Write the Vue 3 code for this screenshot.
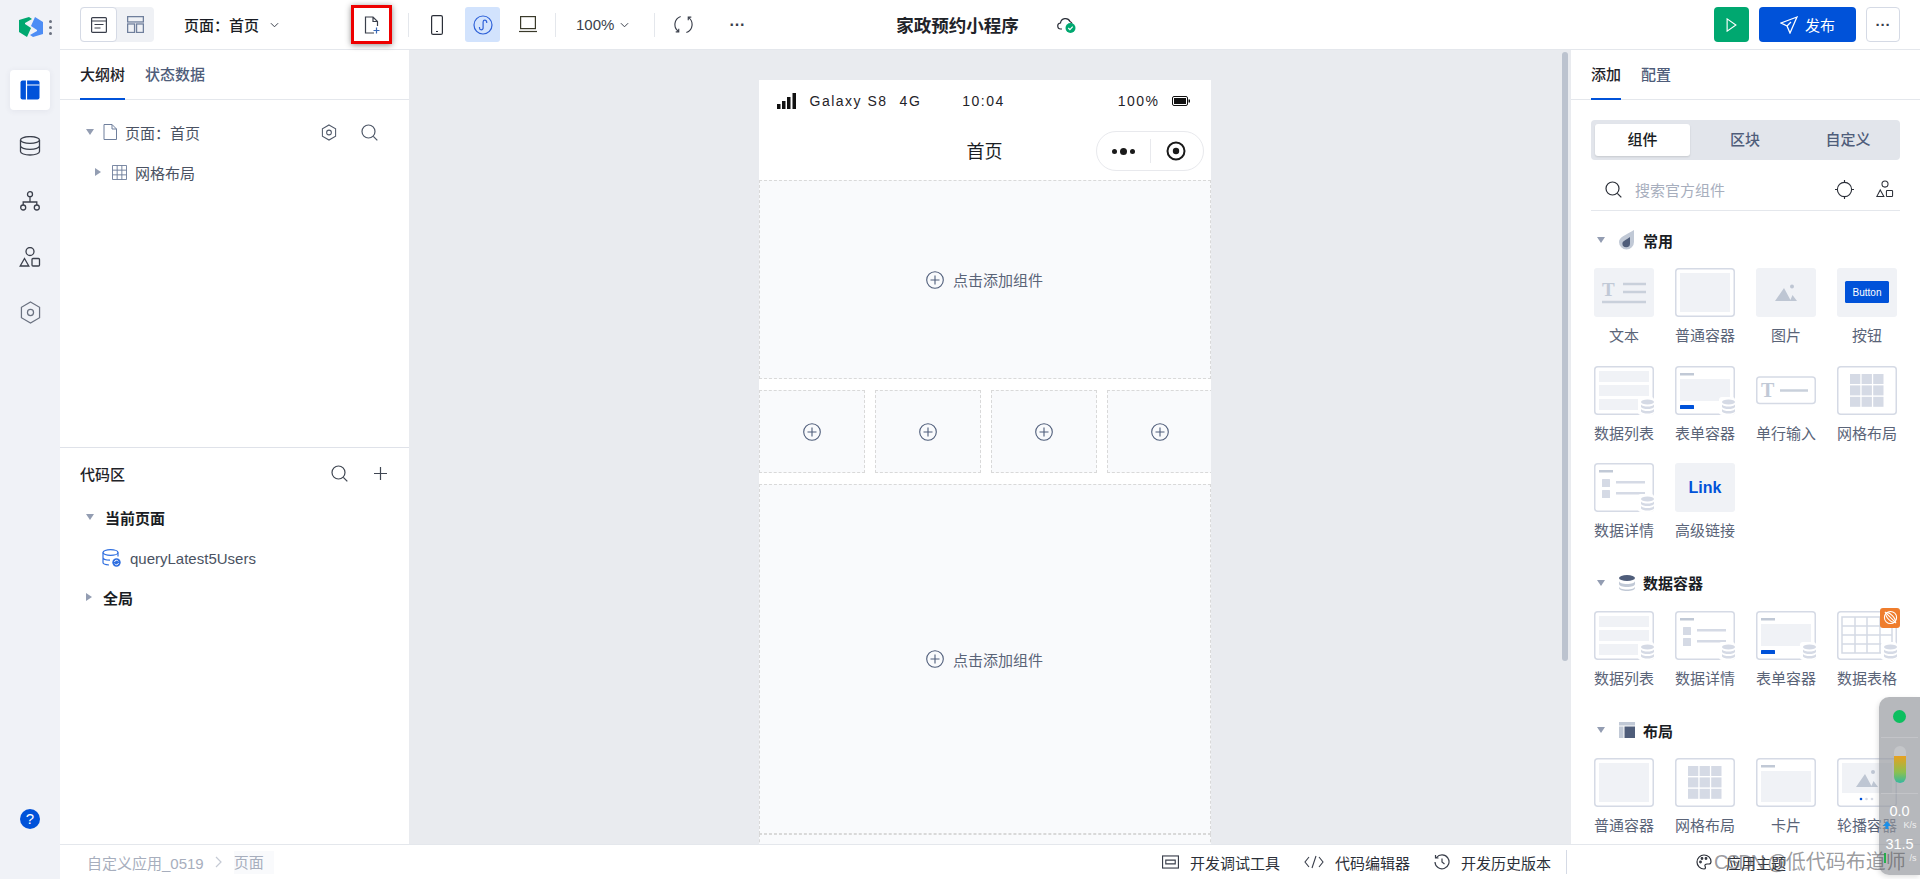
<script setup>
const railIcons = ['layout', 'db', 'tree', 'shapes', 'hex']

const sections = [
  {
    title: '常用',
    icon: 'drop',
    items: [
      { label: '文本', kind: 'text' },
      { label: '普通容器', kind: 'box' },
      { label: '图片', kind: 'image' },
      { label: '按钮', kind: 'button' },
      { label: '数据列表', kind: 'list' },
      { label: '表单容器', kind: 'form' },
      { label: '单行输入', kind: 'input' },
      { label: '网格布局', kind: 'grid' },
      { label: '数据详情', kind: 'detail' },
      { label: '高级链接', kind: 'link' }
    ]
  },
  {
    title: '数据容器',
    icon: 'stack',
    items: [
      { label: '数据列表', kind: 'list' },
      { label: '数据详情', kind: 'detail' },
      { label: '表单容器', kind: 'form' },
      { label: '数据表格', kind: 'table', badge: true }
    ]
  },
  {
    title: '布局',
    icon: 'panel',
    items: [
      { label: '普通容器', kind: 'box' },
      { label: '网格布局', kind: 'grid' },
      { label: '卡片', kind: 'card' },
      { label: '轮播容器', kind: 'carousel' }
    ]
  }
]

const gridCells = []
for (let r = 0; r < 3; r++) {
  for (let c = 0; c < 3; c++) {
    gridCells.push({ x: 13 + c * 11.6, y: 8 + r * 11.4 })
  }
}
</script>

<template>
  <div class="app">
    <aside class="rail">
      <div class="rail-logo">
        <svg viewBox="0 0 24 20" width="24" height="20">
          <path d="M0 3L10 0l3 2-7 4v1l6 4-4 9-8-5z" fill="#00a870"/>
          <path d="M24 17l-10 3-3-2 7-4v-1l-6-4 4-9 8 5z" fill="#4d8df5"/>
        </svg>
        <span class="logo-dots"><i></i><i></i><i></i></span>
      </div>
      <div v-for="icon in railIcons" :key="icon" class="rail-item" :class="{ active: icon === 'layout' }">
        <svg v-if="icon === 'layout'" viewBox="0 0 20 20" width="20" height="20">
          <rect x="0.500" y="0.500" width="19" height="19" rx="2" fill="#0052d9"/>
          <path d="M6.500 5h13M6.500 0v20" stroke="#fff" stroke-width="1.200" fill="none"/>
        </svg>
        <svg v-else-if="icon === 'db'" viewBox="0 0 22 20" width="22" height="20" fill="none" stroke="#3a3f4b" stroke-width="1.300">
          <ellipse cx="11" cy="4" rx="9.500" ry="3.400"/>
          <path d="M1.500 4v11.500c0 2 4.200 3.500 9.500 3.500s9.500-1.500 9.500-3.500V4M1.500 9.800c0 2 4.200 3.500 9.500 3.500s9.500-1.500 9.500-3.500"/>
        </svg>
        <svg v-else-if="icon === 'tree'" viewBox="0 0 20 20" width="20" height="20" fill="none" stroke="#3a3f4b" stroke-width="1.300">
          <circle cx="10" cy="3.200" r="2.500"/>
          <circle cx="3.200" cy="16.500" r="2.500"/>
          <circle cx="16.800" cy="16.500" r="2.500"/>
          <path d="M10 5.700v5.300M3.200 14v-3h13.600v3"/>
        </svg>
        <svg v-else-if="icon === 'shapes'" viewBox="0 0 22 20" width="22" height="20" fill="none" stroke="#3a3f4b" stroke-width="1.300">
          <circle cx="11" cy="4.500" r="4"/>
          <path d="M5.500 11.500l4.300 7.500H1.200z"/>
          <rect x="13" y="11.500" width="7.500" height="7.500" rx="1"/>
        </svg>
        <svg v-else viewBox="0 0 22 24" width="21" height="23" fill="none" stroke="#6b7280" stroke-width="1.300">
          <path d="M11 1l9.500 5.500v11L11 23l-9.500-5.500v-11z"/>
          <circle cx="11" cy="12" r="3.200"/>
        </svg>
      </div>
      <div class="rail-help">?</div>
    </aside>

    <div class="main">
      <header class="topbar">
        <div class="view-switch">
          <span class="view-btn active">
            <svg viewBox="0 0 16 16" width="16" height="16" fill="none" stroke="#3a3f4b" stroke-width="1.200">
              <rect x="0.600" y="0.600" width="14.800" height="14.800" rx="1"/>
              <path d="M0.600 4h14.800M3.500 7.500h9M3.500 11h6"/>
            </svg>
          </span>
          <span class="view-btn">
            <svg viewBox="0 0 16 16" width="17" height="17" fill="none" stroke="#6f7f9c" stroke-width="1.200">
              <rect x="0.600" y="0.600" width="14.800" height="5"/>
              <rect x="0.600" y="7.500" width="6.500" height="8"/>
              <rect x="9" y="7.500" width="6.400" height="8"/>
            </svg>
          </span>
        </div>
        <div class="page-select">
          <span>页面：首页</span>
          <svg viewBox="0 0 10 6" width="9" height="6" fill="none" stroke="#3a3f4b" stroke-width="1.100"><path d="M1 1l4 4 4-4"/></svg>
        </div>
        <div class="add-page">
          <svg viewBox="0 0 16 18" width="16" height="18" fill="none" stroke="#3a3f4b" stroke-width="1.200">
            <path d="M10 17H1.500V1H9l4.500 4.500V10M9 1v4.500h4.500"/>
            <path d="M9.500 14.500h6M12.500 11.500v6" stroke="#3566b5"/>
          </svg>
          <span class="mark"></span>
        </div>
        <span class="bar-sep first"></span>
        <span class="device">
          <svg viewBox="0 0 12 20" width="12" height="20" fill="none" stroke="#2b2f38" stroke-width="1.200">
            <rect x="0.600" y="0.600" width="10.800" height="18.800" rx="1.500"/>
            <path d="M5 16.500h2"/>
          </svg>
        </span>
        <span class="device on">
          <svg viewBox="0 0 20 20" width="20" height="20" fill="none" stroke="#2f62d8" stroke-width="1.200">
            <circle cx="10" cy="10" r="9"/>
            <path d="M6.500 12v1a1.800 1.800 0 0 0 3.600 0V7a1.800 1.800 0 0 1 3.600 0v1"/>
          </svg>
        </span>
        <span class="device">
          <svg viewBox="0 0 18 17" width="18" height="17" fill="none" stroke="#3a3a2a" stroke-width="1.200">
            <rect x="1.600" y="0.600" width="14.800" height="12"/>
            <path d="M0 15.500h18"/>
          </svg>
        </span>
        <span class="bar-sep"></span>
        <span class="zoom-val">100%</span>
        <svg class="zoom-arrow" viewBox="0 0 10 6" width="9" height="6" fill="none" stroke="#3a3f4b" stroke-width="1.100"><path d="M1 1l4 4 4-4"/></svg>
        <span class="bar-sep"></span>
        <span class="refresh">
          <svg viewBox="0 0 20 20" width="19" height="19" fill="none" stroke="#3a3f4b" stroke-width="1.200">
            <path d="M7 1.500A9 9 0 0 0 5 17.500M13 18.500a9 9 0 0 0 2-16M5 14.500v3.300H1.800M15 5.500V2.200h3.200"/>
          </svg>
        </span>
        <span class="dots">···</span>
        <div class="title">家政预约小程序</div>
        <span class="cloud">
          <svg viewBox="0 0 20 18" width="20" height="18">
            <path d="M5 13H4a3 3 0 0 1-.5-6A5 5 0 0 1 13 5.500a3.500 3.500 0 0 1 2 2" fill="none" stroke="#2b2f38" stroke-width="1.200"/>
            <circle cx="13.500" cy="12" r="5" fill="#00a870"/>
            <path d="M11.300 12l1.600 1.600 2.800-3" fill="none" stroke="#fff" stroke-width="1.200"/>
          </svg>
        </span>
        <div class="top-actions">
          <button class="btn-run">
            <svg viewBox="0 0 12 16" width="11" height="14" fill="none" stroke="#fff" stroke-width="1.300"><path d="M1 1l10 7-10 7z"/></svg>
          </button>
          <button class="btn-publish">
            <svg viewBox="0 0 18 18" width="18" height="18" fill="none" stroke="#fff" stroke-width="1.300">
              <path d="M17 1L1 7l6 3 3 7zM7 10l4-4"/>
            </svg>
            发布
          </button>
          <button class="btn-more">···</button>
        </div>
      </header>

      <div class="body">
        <section class="panel-left">
          <div class="left-top">
            <div class="tabs">
              <span class="tab active">大纲树</span>
              <span class="tab">状态数据</span>
            </div>
            <div class="tree-row page-row">
              <i class="caret down"></i>
              <svg class="row-icon" viewBox="0 0 14 16" width="14" height="16" fill="none" stroke="#6f7f9c" stroke-width="1"><path d="M1 .5h8l4.500 4.500v10.500H1zM9 .5V5h4.500"/></svg>
              <span>页面：首页</span>
              <div class="tree-tools">
                <svg viewBox="0 0 16 18" width="16" height="17" fill="none" stroke="#4f5868" stroke-width="1.100">
                  <path d="M8 1l7 4v8l-7 4-7-4V5z"/><circle cx="8" cy="9" r="2.500"/>
                </svg>
                <svg viewBox="0 0 17 17" width="17" height="17" fill="none" stroke="#4f5868" stroke-width="1.200">
                  <circle cx="7.500" cy="7.500" r="6.500"/><path d="M12.300 12.300l4 4"/>
                </svg>
              </div>
            </div>
            <div class="tree-row grid-row">
              <i class="caret side"></i>
              <svg class="row-icon" viewBox="0 0 16 16" width="15" height="15" fill="none" stroke="#6f7f9c" stroke-width="1"><path d="M.5.500h15v15H.5zM5.500.5v15M10.500.5v15M.5 5.500h15M.5 10.500h15"/></svg>
              <span>网格布局</span>
            </div>
          </div>
          <div class="code-area">
            <div class="code-head">
              <span>代码区</span>
              <div class="code-tools">
                <svg viewBox="0 0 17 17" width="17" height="17" fill="none" stroke="#3f4652" stroke-width="1.200">
                  <circle cx="7.500" cy="7.500" r="6.500"/><path d="M12.300 12.300l4 4"/>
                </svg>
                <svg viewBox="0 0 13 13" width="13" height="13" fill="none" stroke="#3f4652" stroke-width="1.200"><path d="M6.500 0v13M0 6.500h13"/></svg>
              </div>
            </div>
            <div class="code-group"><i class="caret down"></i><span>当前页面</span></div>
            <div class="code-item">
              <svg viewBox="0 0 20 19" width="20" height="19" fill="none" stroke="#2f6fe0" stroke-width="1.200">
                <ellipse cx="8.500" cy="3.500" rx="7.500" ry="2.800"/>
                <path d="M1 3.500v10c0 1.200 2.500 2.200 6 2.500M1 8.500c0 1.400 2.800 2.600 7 2.700M16 3.500v4"/>
                <circle cx="14.500" cy="13.500" r="4.200" fill="#2f6fe0" stroke="none"/>
                <path d="M12.500 13a2 2 0 0 1 3.800-.6M16.500 14a2 2 0 0 1-3.800.6" stroke="#fff" stroke-width="0.900"/>
              </svg>
              <span>queryLatest5Users</span>
            </div>
            <div class="code-group"><i class="caret side"></i><span>全局</span></div>
          </div>
        </section>

        <section class="canvas">
          <div class="canvas-scroll">
            <div class="phone">
              <div class="status">
                <svg viewBox="0 0 20 16" width="20" height="16" fill="#111">
                  <rect x="0" y="11" width="3.500" height="5"/>
                  <rect x="5" y="8" width="3.500" height="8"/>
                  <rect x="10" y="4" width="3.500" height="12"/>
                  <rect x="15.500" y="0" width="3.500" height="16"/>
                </svg>
                <span class="carrier">Galaxy S8</span>
                <span class="net">4G</span>
                <span class="clock">10:04</span>
                <span class="batt-num">100%</span>
                <svg viewBox="0 0 18 10" width="18" height="10">
                  <rect x="0.500" y="0.500" width="15" height="9" rx="1.500" fill="none" stroke="#111"/>
                  <rect x="2" y="2" width="12" height="6" fill="#111"/>
                  <rect x="16.500" y="3.500" width="1.500" height="3" fill="#111"/>
                </svg>
              </div>
              <div class="navbar">
                <span class="nav-title">首页</span>
                <div class="capsule">
                  <span class="cap-dots"><i></i><b></b><i></i></span>
                  <span class="cap-sep"></span>
                  <svg viewBox="0 0 20 20" width="20" height="20">
                    <circle cx="10" cy="10" r="8.500" fill="none" stroke="#1a1a1a" stroke-width="2"/>
                    <circle cx="10" cy="10" r="3.200" fill="#1a1a1a"/>
                  </svg>
                </div>
              </div>
              <div class="slot slot-a">
                <svg class="plus" viewBox="0 0 18 18" width="18" height="18" fill="none" stroke="#4f5d7a" stroke-width="1.100">
                  <circle cx="9" cy="9" r="8.300"/><path d="M9 4.500v9M4.500 9h9"/>
                </svg>
                <span>点击添加组件</span>
              </div>
              <div class="slot-row">
                <div v-for="n in 4" :key="n" class="slot cell">
                  <svg class="plus" viewBox="0 0 18 18" width="18" height="18" fill="none" stroke="#4f5d7a" stroke-width="1.100">
                    <circle cx="9" cy="9" r="8.300"/><path d="M9 4.500v9M4.500 9h9"/>
                  </svg>
                </div>
              </div>
              <div class="slot slot-b">
                <svg class="plus" viewBox="0 0 18 18" width="18" height="18" fill="none" stroke="#4f5d7a" stroke-width="1.100">
                  <circle cx="9" cy="9" r="8.300"/><path d="M9 4.500v9M4.500 9h9"/>
                </svg>
                <span>点击添加组件</span>
              </div>
              <div class="slot slot-c"></div>
            </div>
          </div>
          <div class="scroll-track"><span class="scroll-thumb"></span></div>
        </section>

        <section class="panel-right">
          <div class="tabs">
            <span class="tab active">添加</span>
            <span class="tab">配置</span>
          </div>
          <div class="right-body">
            <div class="segment">
              <span class="seg active">组件</span>
              <span class="seg">区块</span>
              <span class="seg">自定义</span>
            </div>
            <div class="search">
              <svg viewBox="0 0 17 17" width="17" height="17" fill="none" stroke="#2b2f38" stroke-width="1.200">
                <circle cx="7.500" cy="7.500" r="6.500"/><path d="M12.300 12.300l4 4"/>
              </svg>
              <span class="placeholder">搜索官方组件</span>
              <svg class="locate" viewBox="0 0 20 20" width="19" height="19" fill="none" stroke="#2b2f38" stroke-width="1.200">
                <circle cx="10" cy="10" r="7.500"/><path d="M10 0v3M10 17v3M0 10h3M17 10h3"/>
              </svg>
              <svg viewBox="0 0 19 18" width="18" height="18" fill="none" stroke="#2b2f38" stroke-width="1.100">
                <circle cx="9.500" cy="3.800" r="3.200"/>
                <path d="M4.500 10l3.800 7H.8z"/>
                <rect x="11" y="10.500" width="6.500" height="6.500" rx="0.800"/>
              </svg>
            </div>

            <div v-for="section in sections" :key="section.title" class="section">
              <div class="section-head">
                <i class="caret down"></i>
                <svg v-if="section.icon === 'drop'" viewBox="0 0 16 20" width="16" height="20">
                  <path d="M15 0v12a7.500 7.500 0 1 1-15 0C0 7 7 5 15 0z" fill="#c1c9d6"/>
                  <path d="M11 7v6.500a3.800 3.800 0 1 1-7.600 0C3.400 11 7 10 11 7z" fill="#4f5d7a"/>
                </svg>
                <svg v-else-if="section.icon === 'stack'" viewBox="0 0 16 16" width="16" height="16">
                  <ellipse cx="8" cy="3" rx="8" ry="3" fill="#4f5d7a"/>
                  <path d="M0 6c0 1.700 3.600 3 8 3s8-1.300 8-3v3c0 1.700-3.600 3-8 3s-8-1.300-8-3zM0 11.500c0 1.700 3.600 3 8 3s8-1.300 8-3V13c0 1.700-3.600 3-8 3s-8-1.300-8-3z" fill="#c1c9d6"/>
                </svg>
                <svg v-else viewBox="0 0 16 16" width="16" height="16">
                  <rect x="0" y="0" width="16" height="3.500" fill="#c1c9d6"/>
                  <rect x="0" y="4.500" width="4.500" height="11.500" fill="#c1c9d6"/>
                  <rect x="5.500" y="4.500" width="10.500" height="11.500" fill="#4f5d7a"/>
                </svg>
                <span>{{ section.title }}</span>
              </div>
              <div class="comp-grid">
                <div v-for="item in section.items" :key="item.label" class="comp">
                  <div class="thumb-wrap">
                    <svg class="thumb" viewBox="0 0 60 49" width="60" height="49">
                      <template v-if="item.kind === 'text'">
                        <rect width="60" height="49" rx="3" fill="#f0f2f6"/>
                        <text x="8" y="28" class="thumb-t">T</text>
                        <path d="M29 16h23M29 24h23M8 34h44" stroke="#c9d0db" stroke-width="2.500"/>
                      </template>
                      <template v-else-if="item.kind === 'image'">
                        <rect width="60" height="49" rx="3" fill="#f0f2f6"/>
                        <path d="M19 33l9-13 7 13zM34 33l2.500-6 4.500 6z" fill="#bec6d3"/>
                        <circle cx="36" cy="18.500" r="2" fill="#bec6d3"/>
                      </template>
                      <template v-else-if="item.kind === 'button'">
                        <rect width="60" height="49" rx="3" fill="#f0f2f6"/>
                        <rect x="8" y="13" width="44" height="22" rx="1.500" fill="#0052d9"/>
                        <text x="30" y="28" class="thumb-btn">Button</text>
                      </template>
                      <template v-else-if="item.kind === 'link'">
                        <rect width="60" height="49" rx="3" fill="#f0f2f6"/>
                        <text x="30" y="30" class="thumb-link">Link</text>
                      </template>
                      <template v-else-if="item.kind === 'input'">
                        <rect x="0.750" y="11" width="58.500" height="26.500" rx="3" fill="#fff" stroke="#d5dae5" stroke-width="1.500"/>
                        <text x="5" y="31" class="thumb-t small">T</text>
                        <path d="M24 24.500h28" stroke="#c9d0db" stroke-width="2.500"/>
                      </template>
                      <template v-else>
                        <rect x="0.750" y="0.750" width="58.500" height="47.500" rx="3" fill="#fff" stroke="#d5dae5" stroke-width="1.500"/>
                        <rect v-if="item.kind === 'box'" x="5" y="5" width="50" height="39" fill="#f0f2f6"/>
                        <g v-if="item.kind === 'list'" fill="#f0f2f6">
                          <rect x="5" y="5" width="50" height="11"/>
                          <rect x="5" y="19" width="50" height="11"/>
                          <rect x="5" y="33" width="50" height="11"/>
                        </g>
                        <g v-if="item.kind === 'form'">
                          <rect x="5" y="7" width="14" height="2.500" fill="#c1c9d6"/>
                          <rect x="5" y="13" width="50" height="22" fill="#f0f2f6"/>
                          <rect x="5" y="39" width="14" height="4" rx="0.500" fill="#0052d9"/>
                        </g>
                        <g v-if="item.kind === 'card'">
                          <rect x="5" y="7" width="14" height="2.500" fill="#c1c9d6"/>
                          <rect x="5" y="13" width="50" height="31" fill="#f0f2f6"/>
                        </g>
                        <g v-if="item.kind === 'detail'" fill="#d5dae5">
                          <rect x="5" y="7" width="14" height="2.500" fill="#c1c9d6"/>
                          <rect x="8" y="16" width="8" height="8" rx="0.500"/>
                          <rect x="8" y="27" width="8" height="8" rx="0.500"/>
                          <rect x="22" y="18" width="29" height="2.500"/>
                          <rect x="22" y="29" width="29" height="2.500"/>
                        </g>
                        <g v-if="item.kind === 'grid'" fill="#d5dae5">
                          <rect v-for="(c, i) in gridCells" :key="i" :x="c.x" :y="c.y" width="10.300" height="10"/>
                        </g>
                        <g v-if="item.kind === 'table'" fill="none" stroke="#d5dae5" stroke-width="1.500">
                          <path d="M5 6h50v36H5zM5 15h50M5 24h50M5 33h50M18 6v36M30 6v36M43 6v36"/>
                        </g>
                        <g v-if="item.kind === 'carousel'">
                          <rect x="5" y="5" width="50" height="30" fill="#f0f2f6"/>
                          <path d="M19 29l9-13 7 13zM34 29l2.500-6 4.500 6z" fill="#bec6d3"/>
                          <circle cx="36" cy="14" r="2" fill="#bec6d3"/>
                          <circle cx="24" cy="41" r="1.300" fill="#0052d9"/>
                          <circle cx="29.500" cy="41" r="1.300" fill="#d5dae5"/>
                          <circle cx="35" cy="41" r="1.300" fill="#d5dae5"/>
                        </g>
                      </template>
                      <g v-if="['list', 'form', 'detail', 'table'].includes(item.kind)">
                        <rect x="44" y="31" width="16" height="18" rx="3" fill="#fff"/>
                        <ellipse cx="53.500" cy="36" rx="6.500" ry="2.500" fill="#d5dae5"/>
                        <path d="M47 38.500c1 1.500 3.500 2 6.500 2s5.500-.5 6.500-2v2.500c-1 1.500-3.500 2-6.500 2s-5.500-.5-6.500-2zM47 43c1 1.500 3.500 2 6.500 2s5.500-.5 6.500-2v2.500c-1 1.500-3.500 2-6.500 2s-5.500-.5-6.500-2z" fill="#d5dae5"/>
                      </g>
                    </svg>
                    <span v-if="item.badge" class="badge">
                      <svg viewBox="0 0 16 16" width="15" height="15" fill="none" stroke="#fff" stroke-width="1.100">
                        <circle cx="8" cy="8" r="6.500"/>
                        <ellipse cx="8" cy="8" rx="6.500" ry="2.800" transform="rotate(45 8 8)"/>
                        <path d="M2 2l12 12"/>
                      </svg>
                    </span>
                  </div>
                  <div class="comp-label">{{ item.label }}</div>
                </div>
              </div>
            </div>
          </div>
        </section>
      </div>

      <footer class="bottom">
        <span class="crumb">自定义应用_0519</span>
        <svg class="crumb-arrow" viewBox="0 0 7 12" width="7" height="12" fill="none" stroke="#c5cad4" stroke-width="1.200"><path d="M1 1l5 5-5 5"/></svg>
        <span class="crumb current">页面</span>
        <div class="bottom-tools">
          <span class="tool">
            <svg viewBox="0 0 18 14" width="17" height="14" fill="none" stroke="#3a3f4b" stroke-width="1.200">
              <rect x="0.600" y="0.600" width="16.800" height="12.800"/><path d="M4 5h10v4H4z"/>
            </svg>
            开发调试工具
          </span>
          <span class="tool">
            <svg viewBox="0 0 20 14" width="20" height="14" fill="none" stroke="#3a3f4b" stroke-width="1.100">
              <path d="M5 2L1 7l4 5M15 2l4 5-4 5M12 1L8 13"/>
            </svg>
            代码编辑器
          </span>
          <span class="tool">
            <svg viewBox="0 0 16 16" width="16" height="16" fill="none" stroke="#3a3f4b" stroke-width="1.200">
              <path d="M2.500 3.500A7 7 0 1 1 1 8M1.500 1v3h3M8 4.500V8l2.500 2"/>
            </svg>
            开发历史版本
          </span>
          <span class="tool-sep"></span>
          <span class="tool theme">
            <svg viewBox="0 0 16 16" width="16" height="16" fill="none" stroke="#2b2f38" stroke-width="1.200">
              <path d="M8 1a7 7 0 0 0 0 14c2 0 1.500-2 1-3s.5-2 2-2h2c1.500 0 2-1 2-2.500C15 4 12 1 8 1z"/>
              <circle cx="4.500" cy="8" r="0.800"/><circle cx="6" cy="4.500" r="0.800"/><circle cx="10" cy="4.500" r="0.800"/>
            </svg>
            应用主题
          </span>
        </div>
      </footer>
    </div>

    <div class="net-widget">
      <span class="net-dot"></span>
      <span class="net-line"></span>
      <span class="net-pill"><i></i></span>
      <span class="net-line"></span>
      <span class="net-val">0.0</span>
      <span class="net-unit">
        <svg viewBox="0 0 8 8" width="8" height="8"><path d="M4 0l4 5H5.500v3h-3V5H0z" fill="#1a8fe8"/></svg>
        <span>K/s</span>
      </span>
      <span class="net-val second">31.5</span>
      <span class="net-unit">
        <svg viewBox="0 0 4 10" width="4" height="10"><rect x="1" width="2" height="10" fill="#22b14c"/></svg>
        <span>/s</span>
      </span>
    </div>
    <div class="watermark"><span class="wm-latin">CSDN @</span>低代码布道师</div>
  </div>
</template>

<style scoped>
.app {
  display: flex;
  width: 1920px;
  height: 879px;
  overflow: hidden;
  font-family: "Liberation Sans", "Noto Sans CJK SC", sans-serif;
  color: #2b2f38;
  font-size: 15px;
}

/* rail */
.rail {
  width: 60px;
  flex-shrink: 0;
  background: #f0f2f7;
  display: flex;
  flex-direction: column;
  align-items: center;
}
.rail-logo {
  height: 70px;
  width: 100%;
  display: flex;
  align-items: flex-start;
  padding: 17px 0 0 19px;
  gap: 6px;
  box-sizing: border-box;
}
.logo-dots {
  display: flex;
  flex-direction: column;
  gap: 3px;
  padding-top: 3px;
}
.logo-dots i {
  width: 3px;
  height: 3px;
  border-radius: 50%;
  background: #6b7280;
}
.rail-item {
  width: 40px;
  height: 40px;
  margin-bottom: 15.500px;
  display: flex;
  align-items: center;
  justify-content: center;
  border-radius: 4px;
}
.rail-item.active {
  background: #fff;
  box-shadow: 0 1px 6px rgba(60, 70, 100, 0.08);
}
.rail-help {
  margin-top: auto;
  margin-bottom: 50px;
  width: 20px;
  height: 20px;
  border-radius: 50%;
  background: #0052d9;
  color: #fff;
  font-size: 15px;
  line-height: 20px;
  text-align: center;
}

.main {
  flex: 1;
  min-width: 0;
  display: flex;
  flex-direction: column;
}

/* top bar */
.topbar {
  height: 49px;
  flex-shrink: 0;
  border-bottom: 1px solid #e4e7ec;
  background: #fff;
  display: flex;
  align-items: center;
  padding: 0 20px;
  box-sizing: content-box;
}
.view-switch {
  display: flex;
  width: 74px;
  height: 35px;
  background: #eff1f5;
  border-radius: 4px;
}
.view-btn {
  width: 37px;
  display: flex;
  align-items: center;
  justify-content: center;
}
.view-btn.active {
  background: #fff;
  border: 1px solid #d5dae5;
  border-radius: 4px;
  box-sizing: border-box;
}
.page-select {
  margin-left: 30px;
  width: 128px;
  display: flex;
  align-items: center;
  gap: 11px;
  font-size: 15px;
  font-weight: 500;
  color: #1a1d24;
  white-space: nowrap;
}
.add-page {
  position: relative;
  margin-left: 40px;
  width: 39px;
  height: 37px;
  display: flex;
  align-items: center;
  justify-content: center;
}
.mark {
  position: absolute;
  inset: -1px;
  border: 3px solid #ee0000;
  box-shadow: 0 1px 6px rgba(0, 0, 0, 0.45);
}
.bar-sep {
  width: 1px;
  height: 24px;
  background: #e4e7ec;
}
.bar-sep.first {
  margin-left: 17px;
}
.device {
  width: 35px;
  height: 35px;
  margin-left: 10px;
  margin-right: -9px;
  display: flex;
  align-items: center;
  justify-content: center;
  border-radius: 3px;
  flex-shrink: 0;
}
.device.on {
  background: #d2e3fd;
  margin-left: 20px;
  margin-right: 0;
}
.device.on + .device {
  margin-left: 10px;
  margin-right: 10px;
}
.zoom-val {
  margin-left: 20px;
  font-size: 15px;
  color: #3a3f4b;
}
.zoom-arrow {
  margin: 0 25px 0 6px;
}
.refresh {
  margin-left: 19px;
  display: flex;
}
.dots {
  margin-left: 36px;
  font-size: 16px;
  font-weight: 700;
  color: #3a3f4b;
}
.title {
  margin-left: 151px;
  font-size: 17.500px;
  font-weight: 700;
  color: #1f2329;
  white-space: nowrap;
}
.cloud {
  margin-left: 38px;
  display: flex;
}
.top-actions {
  margin-left: auto;
  display: flex;
  gap: 10px;
}
.top-actions button {
  height: 35px;
  border-radius: 4px;
  border: none;
  display: flex;
  align-items: center;
  justify-content: center;
  font-family: inherit;
  padding: 0;
}
.btn-run {
  width: 35px;
  background: #00a870;
}
.btn-publish {
  width: 97px;
  gap: 7px;
  background: #0052d9;
  color: #fff;
  font-size: 15px;
}
.top-actions .btn-more {
  width: 34px;
  background: #fff;
  border: 1px solid #d5dae5;
  color: #3a3f4b;
  font-size: 15px;
  font-weight: 700;
}

.body {
  flex: 1;
  min-height: 0;
  display: flex;
}

/* shared tabs */
.tabs {
  height: 49px;
  border-bottom: 1px solid #e4e7ec;
  padding-left: 20px;
  display: flex;
  gap: 20px;
  box-sizing: content-box;
}
.tab {
  height: 49px;
  line-height: 50px;
  color: #4f5d7a;
  font-weight: 500;
  box-sizing: border-box;
  border-bottom: 2px solid transparent;
}
.tab.active {
  color: #1f2329;
  border-bottom-color: #0052d9;
  height: 50px;
}
.caret {
  display: block;
  width: 0;
  height: 0;
  flex-shrink: 0;
}
.caret.down {
  border-left: 4px solid transparent;
  border-right: 4px solid transparent;
  border-top: 6px solid #939db2;
}
.caret.side {
  border-top: 4px solid transparent;
  border-bottom: 4px solid transparent;
  border-left: 6px solid #939db2;
}

/* left panel */
.panel-left {
  width: 349px;
  flex-shrink: 0;
  display: flex;
  flex-direction: column;
  background: #fff;
}
.left-top {
  height: 398px;
  flex-shrink: 0;
  border-bottom: 1px solid #dfe2e9;
  box-sizing: border-box;
}
.tree-row {
  height: 40px;
  display: flex;
  align-items: center;
  color: #4a5262;
}
.page-row {
  margin-top: 12px;
  padding-left: 26px;
}
.page-row .row-icon {
  margin: 0 8px 0 9px;
}
.tree-tools {
  margin-left: auto;
  margin-right: 31px;
  display: flex;
  align-items: center;
  gap: 24px;
}
.grid-row {
  padding-left: 35px;
}
.grid-row .row-icon {
  margin: 0 8px 0 11px;
}
.code-head {
  height: 51px;
  margin-bottom: -2px;
  display: flex;
  align-items: center;
  padding: 0 22px 0 20px;
  font-weight: 500;
  color: #1f2329;
}
.code-tools {
  margin-left: auto;
  display: flex;
  align-items: center;
  gap: 26px;
}
.code-group {
  height: 40px;
  display: flex;
  align-items: center;
  padding-left: 26px;
  gap: 11px;
  font-weight: 700;
  color: #1a1d24;
}
.code-item {
  height: 40px;
  display: flex;
  align-items: center;
  padding: 2px 0 0 42px;
  gap: 8px;
  color: #4a5262;
  box-sizing: border-box;
}

/* canvas */
.canvas {
  flex: 1;
  min-width: 0;
  display: flex;
  background: #e9ebef;
  overflow: hidden;
}
.canvas-scroll {
  flex: 1;
  min-width: 0;
  overflow: hidden;
}
.phone {
  width: 452px;
  margin: 30px auto 0;
  background: #fff;
}
.status {
  height: 50px;
  display: flex;
  align-items: center;
  padding: 0 21px 8px 18px;
  font-size: 14px;
  letter-spacing: 1.500px;
  color: #1f2329;
  box-sizing: border-box;
}
.status svg:first-child {
  margin-right: 13px;
}
.net {
  margin-left: 12px;
}
.clock {
  margin-left: 41px;
}
.batt-num {
  margin-left: auto;
  margin-right: 12px;
}
.navbar {
  height: 50px;
  padding-bottom: 10px;
  position: relative;
  display: flex;
  align-items: center;
  justify-content: center;
  box-sizing: border-box;
}
.nav-title {
  font-size: 18px;
  color: #1a1d24;
}
.capsule {
  position: absolute;
  right: 7px;
  top: 1px;
  width: 108px;
  height: 40px;
  border: 1px solid #e8e9ed;
  border-radius: 20px;
  box-sizing: border-box;
  display: flex;
  align-items: center;
  padding-left: 15px;
  gap: 15px;
}
.cap-dots {
  display: flex;
  align-items: center;
  gap: 3px;
}
.cap-dots i {
  width: 5px;
  height: 5px;
  border-radius: 50%;
  background: #1a1a1a;
}
.cap-dots b {
  width: 7px;
  height: 7px;
  border-radius: 50%;
  background: #1a1a1a;
}
.cap-sep {
  width: 1px;
  height: 24px;
  background: #e8e9ed;
}
.slot {
  background: #f9fafc;
  border: 1px dashed #d9d9d9;
  box-sizing: border-box;
  display: flex;
  align-items: center;
  justify-content: center;
  gap: 9px;
  color: #5a6478;
  font-size: 15px;
}
.plus {
  flex-shrink: 0;
}
.slot-a {
  height: 199px;
}
.slot-row {
  display: grid;
  grid-template-columns: repeat(4, 106px);
  column-gap: 10px;
  padding: 11px 0;
  overflow: hidden;
}
.cell {
  height: 83px;
}
.slot-b {
  height: 350px;
}
.slot-c {
  height: 40px;
}
.scroll-track {
  width: 11px;
  flex-shrink: 0;
  padding: 2px 3px 0 2px;
  box-sizing: border-box;
}
.scroll-thumb {
  display: block;
  width: 6px;
  height: 609px;
  border-radius: 3px;
  background: #bcc3cf;
}

/* right panel */
.panel-right {
  width: 349px;
  flex-shrink: 0;
  background: #fff;
  display: flex;
  flex-direction: column;
  overflow: hidden;
}
.right-body {
  padding: 20px 20px 0;
}
.segment {
  height: 40px;
  background: #e2e5eb;
  border-radius: 4px;
  padding: 4px;
  display: grid;
  grid-template-columns: 95px 110px 1fr;
  box-sizing: border-box;
}
.seg {
  line-height: 32px;
  text-align: center;
  color: #4f5d7a;
  font-weight: 500;
}
.seg.active {
  background: #fff;
  border-radius: 3px;
  color: #1a1d24;
  box-shadow: 0 1px 2px rgba(0, 0, 0, 0.12);
}
.search {
  height: 51px;
  margin-bottom: 14px;
  border-bottom: 1px solid #e4e7ec;
  display: flex;
  align-items: center;
  padding: 8px 6px 0 14px;
  box-sizing: border-box;
}
.placeholder {
  margin-left: 13px;
  color: #a7aebd;
}
.locate {
  margin-left: auto;
  margin-right: 22px;
}
.section {
  margin-bottom: 25.500px;
}
.section-head {
  height: 30px;
  display: flex;
  align-items: center;
  padding-left: 6px;
  gap: 10px;
  font-weight: 700;
  color: #1a1d24;
}
.section-head svg {
  margin-left: 4px;
}
.section-head span {
  margin-left: -2px;
}
.comp-grid {
  margin-top: 13px;
  padding-left: 3px;
  display: grid;
  grid-template-columns: repeat(4, 60px);
  column-gap: 21px;
  row-gap: 18.500px;
}
.comp {
  height: 79px;
}
.thumb-wrap {
  position: relative;
  height: 49px;
}
.thumb {
  display: block;
}
.thumb-t {
  font-family: "Liberation Serif", serif;
  font-size: 19px;
  font-weight: 700;
  fill: #c1c9d6;
}
.thumb-t.small {
  font-size: 20px;
}
.thumb-btn {
  font-size: 10px;
  fill: #fff;
  text-anchor: middle;
}
.thumb-link {
  font-size: 16px;
  font-weight: 700;
  fill: #0052d9;
  text-anchor: middle;
}
.badge {
  position: absolute;
  right: -3px;
  top: -3px;
  width: 20px;
  height: 20px;
  border-radius: 3px;
  background: #ef7d2d;
  display: flex;
  align-items: center;
  justify-content: center;
}
.comp-label {
  margin-top: 8px;
  line-height: 22px;
  text-align: center;
  white-space: nowrap;
  color: #5a6478;
}

/* bottom bar */
.bottom {
  height: 35px;
  flex-shrink: 0;
  border-top: 1px solid #e4e7ec;
  background: #fff;
  display: flex;
  align-items: center;
  padding-left: 27px;
  box-sizing: border-box;
  color: #a7aebd;
}
.crumb-arrow {
  margin: 0 12px 0 11px;
}
.crumb.current {
  padding-right: 10px;
  background: #f9fafc;
  line-height: 23px;
}
.bottom-tools {
  margin-left: auto;
  width: 758px;
  display: flex;
  align-items: center;
  color: #2b2f38;
}
.tool {
  display: flex;
  align-items: center;
  gap: 11px;
  white-space: nowrap;
  margin-right: 24px;
}
.tool-sep {
  width: 1px;
  height: 24px;
  margin-left: -9px;
  background: #d5dae5;
}
.tool.theme {
  margin-left: 129px;
  gap: 14px;
}

/* overlays */
.net-widget {
  position: absolute;
  left: 1879px;
  top: 697px;
  width: 41px;
  height: 178px;
  background: rgba(148, 150, 156, 0.68);
  border-radius: 10px 0 0 10px;
  display: flex;
  flex-direction: column;
  align-items: center;
  color: #fff;
  box-shadow: -1px 2px 5px rgba(0, 0, 0, 0.12);
}
.net-dot {
  margin-top: 13px;
  width: 13px;
  height: 13px;
  border-radius: 50%;
  background: #0cbf5f;
}
.net-line {
  width: 37px;
  height: 1px;
  margin-top: 14px;
  background: rgba(255, 255, 255, 0.18);
}
.net-pill {
  margin-top: 8px;
  width: 12px;
  height: 37px;
  border-radius: 6px;
  background: rgba(255, 255, 255, 0.2);
  display: flex;
  align-items: flex-end;
  overflow: hidden;
}
.net-pill i {
  display: block;
  width: 12px;
  height: 27px;
  background: linear-gradient(#e8a020, #8cc050 60%, #35b8a0);
}
.net-pill + .net-line {
  margin-top: 10px;
}
.net-val {
  margin-top: 9px;
  font-size: 14.500px;
  line-height: 16px;
}
.net-val.second {
  margin-top: 5px;
}
.net-unit {
  width: 34px;
  display: flex;
  align-items: center;
  justify-content: space-between;
  font-size: 9px;
  line-height: 12px;
  color: rgba(255, 255, 255, 0.8);
}
.watermark {
  position: absolute;
  left: 1714px;
  top: 850px;
  font-size: 20px;
  line-height: 24px;
  color: rgba(90, 90, 95, 0.62);
  white-space: nowrap;
}
.wm-latin {
  letter-spacing: -1.800px;
}
</style>

<style>
html, body {
  margin: 0;
  overflow: hidden;
}
</style>
